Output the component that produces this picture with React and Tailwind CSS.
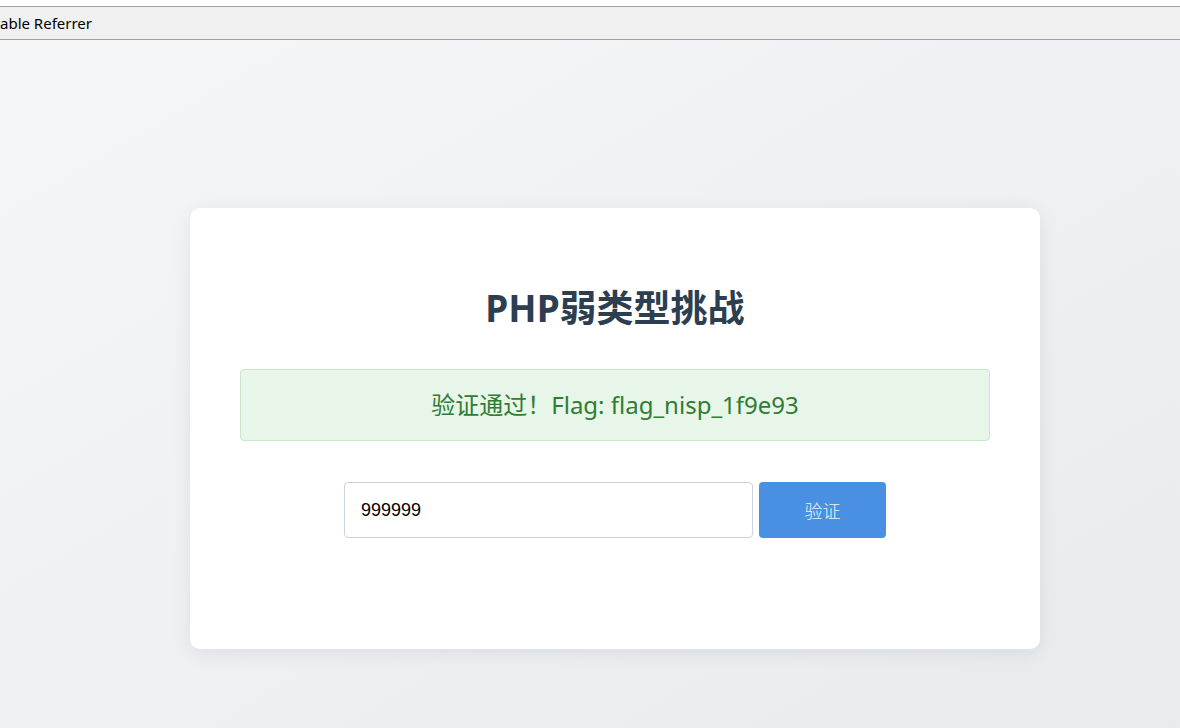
export default function App() {
  return (
    <div className="h-screen flex flex-col overflow-hidden bg-white" style={{ fontFamily: '"Noto Sans", "Noto Sans CJK SC", sans-serif' }}>
      <div className="h-[6px] bg-white" />
      <div className="h-[34px] shrink-0 bg-[#f0f0f0] border-y border-[#a0a0a0] flex items-center">
        <span className="text-[15px] text-black leading-none">able Referrer</span>
      </div>
      <div className="flex-1 bg-gradient-to-br from-[#f5f6f8] to-[#e8ebee] flex justify-center pl-[50px] pt-[168px]">
        <div className="w-[850px] h-[441px] bg-white rounded-[10px] shadow-[0_4px_20px_rgba(0,0,0,0.08)] px-[50px] pt-[78px] flex flex-col items-center">
          <h1 className="text-[37px] leading-[44px] font-bold text-[#2c3e50]">PHP弱类型挑战</h1>
          <div className="mt-[39px] w-full h-[72px] bg-[#e8f5e9] border border-[#c8e6c9] rounded-[4px] flex items-center justify-center text-[24px] text-[#2e7d32]">
            验证通过！Flag: flag_nisp_1f9e93
          </div>
          <div className="mt-[41px] flex gap-[6px]">
            <input
              defaultValue="999999"
              className="w-[409px] h-[56px] border border-[#ccd3dc] rounded-[4px] px-[16px] text-[18px] text-black outline-none"
              style={{ fontFamily: '"Liberation Sans", sans-serif' }}
            />
            <button className="w-[127px] h-[56px] bg-[#4a90e2] rounded-[4px] text-[#eef3fb] text-[18px] font-light" style={{ fontFamily: '"Noto Sans CJK SC", serif' }}>
              验证
            </button>
          </div>
        </div>
      </div>
    </div>
  );
}
